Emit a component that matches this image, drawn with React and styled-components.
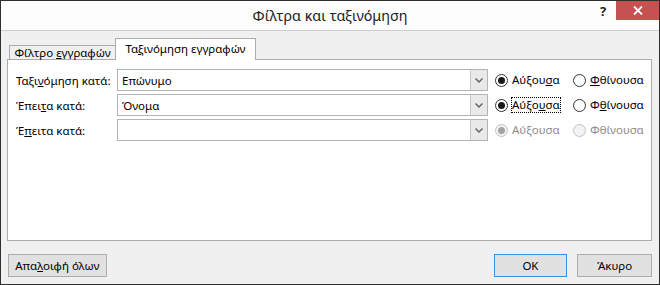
import React from 'react'
import styled, { createGlobalStyle } from 'styled-components';

const GlobalStyle = createGlobalStyle`
html, body {
  margin: 0;
  padding: 0;
  background: #f0f0f0;
}
body {
  font-family: "Noto Sans", "Open Sans", sans-serif;
  font-size: 11.5px;
  color: #000;
}
* { box-sizing: border-box; }
`;

const Window = styled.div`
width: 660px;
height: 285px;
border: 1px solid #2f2f2f;
background: #f0f0f0;
display: flex;
flex-direction: column;
`;

const TitleBar = styled.div`
height: 30px;
flex: none;
background: #fdfdfd;
border-bottom: 1px solid #cfcfcf;
display: grid;
grid-template-columns: 1fr auto 1fr;
`;

const Title = styled.div`
grid-column: 2;
font-size: 14.3px;
line-height: 29px;
color: #222;
`;

const Controls = styled.div`
grid-column: 3;
justify-self: end;
align-self: start;
display: flex;
align-items: flex-start;
`;

const HelpButton = styled.div`
width: 26px;
height: 20px;
font-weight: bold;
font-size: 13px;
line-height: 20px;
text-align: center;
color: #222;
`;

const CloseButton = styled.div`
width: 43px;
height: 19px;
background: #c75050;
display: flex;
align-items: center;
justify-content: center;
`;

const Body = styled.div`
flex: 1;
display: flex;
flex-direction: column;
padding: 7px 7px 7px 6px;
`;

const TabStrip = styled.div`
height: 22px;
margin-bottom: -1px;
padding-left: 2px;
display: flex;
align-items: flex-end;
position: relative;
z-index: 1;
`;

const Tab = styled.div`
height: ${({ $active }) => ($active ? '22px' : '14px')};
width: ${({ $w }) => $w}px;
margin-bottom: ${({ $active }) => ($active ? '0' : '1px')};
margin-left: ${({ $active }) => ($active ? '-1px' : '0')};
border: 1px solid #acacac;
border-bottom: none;
background: ${({ $active }) => ($active ? '#fff' : '#f0f0f0')};
display: flex;
justify-content: center;
align-items: ${({ $active }) => ($active ? 'flex-start' : 'center')};
padding-top: ${({ $active }) => ($active ? '3px' : '0')};
line-height: 14px;
white-space: nowrap;
`;

const Panel = styled.div`
height: 182px;
background: #fff;
border: 1px solid #acacac;
padding: 9px 8px;
display: grid;
grid-template-columns: 101px 371px 1fr;
grid-auto-rows: 22px;
row-gap: 3px;
align-content: start;
`;

const Label = styled.div`
display: flex;
align-items: center;
white-space: nowrap;
`;

const Combo = styled.div`
border: 1px solid #b4b4b4;
background: #fff;
display: flex;
align-items: center;
justify-content: space-between;
padding-left: 4px;
`;

const ComboButton = styled.div`
width: 17px;
height: 100%;
background: #e9e9e9;
border-left: 1px solid #c8c8c8;
display: flex;
align-items: center;
justify-content: center;
`;

const RadioGroup = styled.div`
display: flex;
align-items: center;
padding-left: 7px;
`;

const RadioItem = styled.div`
width: ${({ $w }) => $w}px;
display: flex;
align-items: center;
gap: 4px;
color: ${({ $disabled }) => ($disabled ? '#8d8d8d' : '#000')};
white-space: nowrap;
`;

const Circle = styled.span`
width: 13px;
height: 13px;
border-radius: 50%;
border: 1px solid ${({ $disabled }) => ($disabled ? '#c2c2c2' : '#333')};
background: ${({ $disabled }) => ($disabled ? '#f2f2f2' : '#fff')};
display: flex;
align-items: center;
justify-content: center;
flex: none;
&::after {
  content: '';
  width: 7px;
  height: 7px;
  border-radius: 50%;
  background: ${({ $disabled }) => ($disabled ? '#a3a3a3' : '#1a1a1a')};
  display: ${({ $checked }) => ($checked ? 'block' : 'none')};
}
`;

const RadioText = styled.span`
outline: ${({ $focus }) => ($focus ? '1px dotted #000' : 'none')};
line-height: 14px;
`;

const U = styled.span`
text-decoration: underline;
`;

const Footer = styled.div`
margin-top: 13px;
display: flex;
align-items: center;
padding-left: 1px;
`;

const Button = styled.div`
height: 23px;
width: ${({ $w }) => $w}px;
margin-left: ${({ $ml }) => $ml || 0}px;
background: #e1e1e1;
border: 1px solid ${({ $default }) => ($default ? '#3c8fe6' : '#adadad')};
display: flex;
align-items: center;
justify-content: center;
white-space: nowrap;
`;

const Chevron = () => (
  <svg width="8" height="5" viewBox="0 0 8 5">
    <polyline points="0.5,0.5 4,4 7.5,0.5" fill="none" stroke="#606060" strokeWidth="1.4" />
  </svg>
);

const Radio = ({ checked, disabled, focus, w, children }) => (
  <RadioItem $w={w} $disabled={disabled}>
    <Circle $checked={checked} $disabled={disabled} />
    <RadioText $focus={focus}>{children}</RadioText>
  </RadioItem>
);

const rows = [
  { label: <>Ταξι<U>ν</U>όμηση κατά:</>, value: 'Επώνυμο', asc: <>Αύξου<U>σ</U>α</>, desc: <><U>Φ</U>θίνουσα</> },
  { label: <>Έπει<U>τ</U>α κατά:</>, value: 'Όνομα', asc: <>Αύξο<U>υ</U>σα</>, desc: <>Φ<U>θ</U>ίνουσα</>, focus: true },
  { label: <>Έ<U>π</U>ειτα κατά:</>, value: '', asc: 'Αύξουσα', desc: 'Φθίνουσα', disabled: true },
];

export default function App() {
  return (
    <>
      <GlobalStyle />
      <Window>
        <TitleBar>
          <Title>Φίλτρα και ταξινόμηση</Title>
          <Controls>
            <HelpButton>?</HelpButton>
            <CloseButton>
              <svg width="10" height="9" viewBox="0 0 10 9">
                <path d="M1,0.5 L9,8.5 M9,0.5 L1,8.5" stroke="#fff" strokeWidth="1.8" />
              </svg>
            </CloseButton>
          </Controls>
        </TitleBar>
        <Body>
          <TabStrip>
            <Tab $w={107}><span>Φίλτρο <U>ε</U>γγραφών</span></Tab>
            <Tab $active $w={141}><span>Τα<U>ξ</U>ινόμηση εγγραφών</span></Tab>
          </TabStrip>
          <Panel>
            {rows.map((r, i) => (
              <React.Fragment key={i}>
                <Label><span>{r.label}</span></Label>
                <Combo>
                  <span>{r.value}</span>
                  <ComboButton><Chevron /></ComboButton>
                </Combo>
                <RadioGroup>
                  <Radio w={78} checked disabled={r.disabled} focus={r.focus}>{r.asc}</Radio>
                  <Radio w={80} disabled={r.disabled}>{r.desc}</Radio>
                </RadioGroup>
              </React.Fragment>
            ))}
          </Panel>
          <Footer>
            <Button $w={99}><span>Απα<U>λ</U>οιφή όλων</span></Button>
            <Button $w={74} $ml={387} $default>OK</Button>
            <Button $w={75} $ml={10}>Άκυρο</Button>
          </Footer>
        </Body>
      </Window>
    </>
  )
}
